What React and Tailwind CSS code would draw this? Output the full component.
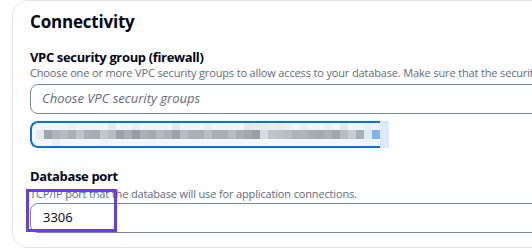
import React from "react";

const topRow = [
  "#eef6fd", "#eef5fb", "#eef6fd", "#eef6fd", "#eaf1f7", "#eef6fd", "#eef6fd", "#eef6fd", "#eef6fd", "#e5ebf0",
  "#eef6fd", "#eef6fd", "#e8eff5", "#eef6fd", "#eef6fd", "#eef6fd", "#eef6fd", "#e3e9ef", "#eef6fd", "#eef6fd",
  "#eef6fd", "#e8eef4", "#eef6fd", "#eef6fd", "#eef6fd", "#eef6fd", "#e2e8ee", "#e4eaf0", "#e6ecf2", "#e8eef4",
  "#e6ecf2", "#e9eff5", "#eef6fd", "#e7edf3", "#eef6fd", "#eef6fd", "#e9eff5", "#eef6fd", "#e2e8ee", "#eef6fd",
  "#eef6fd", "#e9f2fc", "#eef6fd",
];

const midRow = [
  "#e5e8eb", "#9ea6ad", "#aeb4ba", "#b5bac0", "#aab0b6", "#bcc5cc", "#a9afb5", "#a6acb2", "#c0c8ce", "#b5bcc2",
  "#9aa2a9", "#a8afb5", "#959ea5", "#a9b0b6", "#a3aab0", "#b3bac0", "#aab1b7", "#9ba3aa", "#b5bcc2", "#aab1b7",
  "#a9b0b6", "#b7bec4", "#a7aeb4", "#aaafb4", "#b8bcc0", "#a8adb2", "#a3a8ad", "#9aa0a6", "#d5dde3", "#c0c5ca",
  "#bcc1c6", "#b8bdc2", "#aeb3b8", "#b0b5ba", "#a8adb2", "#a4a9ae", "#acb1b6", "#a2a7ac", "#b4bcc4", "#c6ccd1",
  "#a8aeb4", "#dcebf9", "#80b4ee",
];

const botRow = [
  "#f0f7fd", "#f0f7fd", "#eaf1f6", "#f0f7fd", "#f0f7fd", "#f0f7fd", "#f0f7fd", "#f0f7fd", "#ecf3f9", "#f0f7fd",
  "#f0f7fd", "#f0f7fd", "#f0f7fd", "#f0f7fd", "#eef5fb", "#f0f7fd", "#f0f7fd", "#f0f7fd", "#f0f7fd", "#f0f7fd",
  "#f0f7fd", "#f0f7fd", "#f0f7fd", "#f0f7fd", "#f0f7fd", "#f0f7fd", "#f0f7fd", "#f0f7fd", "#f0f7fd", "#f0f7fd",
  "#f0f7fd", "#f0f7fd", "#f0f7fd", "#f0f7fd", "#f0f7fd", "#f0f7fd", "#f0f7fd", "#f0f7fd", "#f0f7fd", "#f0f7fd",
  "#f0f7fd", "#eef5fc", "#eef5fc",
];

function MosaicRow({ cells, height }) {
  return (
    <div className="flex">
      {cells.map((c, i) => (
        <div key={i} className="w-[8px] shrink-0" style={{ height, backgroundColor: c }} />
      ))}
    </div>
  );
}

// blurred security-group token
function Token() {
  return (
    <div className="flex mt-[7px]">
      <div className="w-[350px] h-[27px] border-2 border-r-0 border-[#0972d3] rounded-l-lg bg-[#f2f8fd] flex items-center pl-[4px] overflow-hidden">
        <div className="flex flex-col">
          <MosaicRow cells={topRow} height={7} />
          <MosaicRow cells={midRow} height={9} />
          <MosaicRow cells={botRow} height={7} />
        </div>
      </div>
      <div className="w-[9px] h-[27px] bg-[#dbe9f8]" />
    </div>
  );
}

export default function App() {
  return (
    <div className="w-[532px] h-[250px] overflow-hidden bg-white font-['Open_Sans',_'Noto_Sans',_sans-serif] text-[#000716]">
      <div className="ml-[12px] w-[800px] h-[248px] border border-[#e3e6e9] rounded-2xl pl-[17px] pt-[11px]">
        <h2 className="text-[17px] leading-[20px] font-bold tracking-[-0.2px]">Connectivity</h2>

        <div className="mt-[17px]">
          <div className="text-[13px] leading-[16px] font-bold tracking-[-0.35px]">VPC security group (firewall)</div>
          <div className="text-[11px] leading-[15px] text-[#5f6b7a] whitespace-nowrap tracking-[-0.15px]">
            Choose one or more VPC security groups to allow access to your database. Make sure that the security group rules allow the appropriate incoming traffic.
          </div>
          <div className="mt-[4px] w-[760px] h-[30px] border border-[#7d8998] rounded-lg flex items-center pl-[11px]">
            <span className="text-[13px] italic text-[#5f6b7a]">Choose VPC security groups</span>
          </div>
          <Token />
        </div>

        <div className="relative mt-[20px]">
          <div className="text-[13px] leading-[16px] font-bold tracking-[-0.35px]">Database port</div>
          <div className="mt-[2px] text-[11px] leading-[15px] text-[#5f6b7a] whitespace-nowrap tracking-[-0.15px]">
            TCP/IP port that the database will use for application connections.
          </div>
          <div className="mt-[2px] w-[760px] h-[30px] border border-[#7d8998] rounded-lg flex items-center pl-[12px]">
            <span className="text-[13px]">3306</span>
          </div>
          <div className="absolute left-[-4px] top-[21px] w-[91px] h-[43px] border-[3px] border-[#6a3fd6]" />
        </div>
      </div>
    </div>
  );
}
